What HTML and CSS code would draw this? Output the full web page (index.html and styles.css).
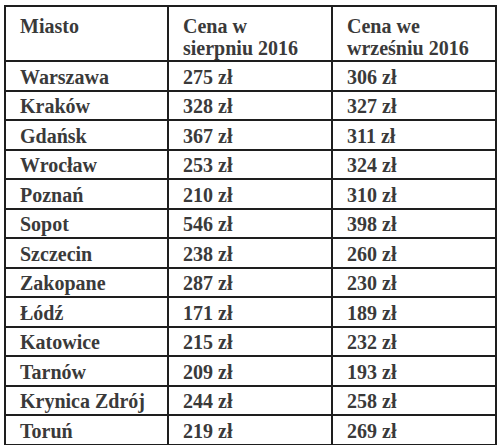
FILE: index.html
```html
<!DOCTYPE html>
<html lang="pl">
<head>
<meta charset="utf-8">
<link rel="stylesheet" href="styles.css">
</head>
<body>
<table class="prices">
  <colgroup>
    <col class="c1"><col class="c2"><col class="c3">
  </colgroup>
  <thead>
    <tr class="head">
      <th>Miasto</th>
      <th>Cena w<br>sierpniu 2016</th>
      <th>Cena we<br>wrześniu 2016</th>
    </tr>
  </thead>
  <tbody>
    <tr><td>Warszawa</td><td>275 zł</td><td>306 zł</td></tr>
    <tr><td>Kraków</td><td>328 zł</td><td>327 zł</td></tr>
    <tr><td>Gdańsk</td><td>367 zł</td><td>311 zł</td></tr>
    <tr><td>Wrocław</td><td>253 zł</td><td>324 zł</td></tr>
    <tr><td>Poznań</td><td>210 zł</td><td>310 zł</td></tr>
    <tr><td>Sopot</td><td>546 zł</td><td>398 zł</td></tr>
    <tr><td>Szczecin</td><td>238 zł</td><td>260 zł</td></tr>
    <tr><td>Zakopane</td><td>287 zł</td><td>230 zł</td></tr>
    <tr><td>Łódź</td><td>171 zł</td><td>189 zł</td></tr>
    <tr><td>Katowice</td><td>215 zł</td><td>232 zł</td></tr>
    <tr><td>Tarnów</td><td>209 zł</td><td>193 zł</td></tr>
    <tr><td>Krynica Zdrój</td><td>244 zł</td><td>258 zł</td></tr>
    <tr><td>Toruń</td><td>219 zł</td><td>269 zł</td></tr>
  </tbody>
</table>
</body>
</html>
```

FILE: styles.css
```css
html, body {
  margin: 0;
  padding: 0;
  background: #ffffff;
}
body {
  padding: 5px 0 0 4px;
  font-family: "Liberation Serif", "Times New Roman", serif;
}
.prices {
  border-collapse: collapse;
  table-layout: fixed;
  width: 491px;
  color: #3a3a3a;
  font-size: 20px;
  font-weight: bold;
}
.c1 { width: 163px; }
.c2 { width: 164px; }
.c3 { width: 164px; }
.prices th,
.prices td {
  border: 2px solid #1e1e1e;
  text-align: left;
  padding: 0 0 0 14px;
  line-height: 22px;
}
.prices th {
  vertical-align: top;
  font-weight: bold;
  padding-top: 8px;
  height: 45px;
}
.prices td {
  height: 29.5px;
  vertical-align: middle;
  padding-top: 2px;
  box-sizing: border-box;
}
```
